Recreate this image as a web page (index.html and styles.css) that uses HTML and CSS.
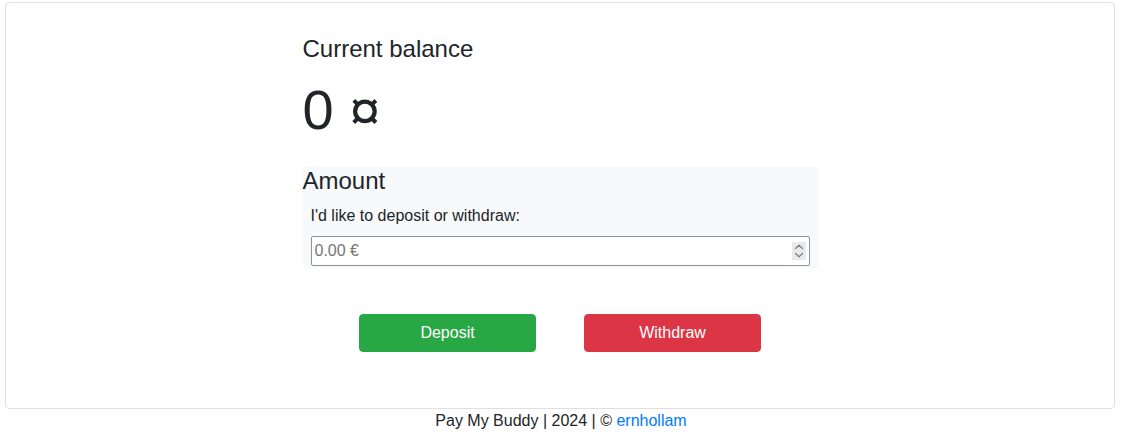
FILE: index.html
```html
<!DOCTYPE html>
<html lang="en">
<head>
<meta charset="utf-8">
<title>Pay My Buddy</title>
<link rel="stylesheet" href="styles.css">
</head>
<body>
<main class="card">
  <div class="content">
    <h4 class="title">Current balance</h4>
    <p class="balance">0 ¤</p>
    <section class="amount">
      <div class="legend">Amount</div>
      <label class="label" for="amount">I'd like to deposit or withdraw:</label>
      <div class="field">
        <input class="input" id="amount" type="number" placeholder="0.00 €">
        <span class="spin" aria-hidden="true">
          <svg width="14" height="18" viewBox="0 0 14 18">
            <rect width="14" height="18" fill="#e9e9ed"/>
            <path d="M3.5 6.5 L7 3.2 L10.5 6.5" fill="none" stroke="#7a7a85" stroke-width="1.2" stroke-linecap="round" stroke-linejoin="round"/>
            <path d="M3.5 11.5 L7 14.8 L10.5 11.5" fill="none" stroke="#7a7a85" stroke-width="1.2" stroke-linecap="round" stroke-linejoin="round"/>
          </svg>
        </span>
      </div>
    </section>
    <div class="actions">
      <button class="btn btn-deposit" type="button">Deposit</button>
      <button class="btn btn-withdraw" type="button">Withdraw</button>
    </div>
  </div>
</main>
<footer class="footer">Pay My Buddy | 2024 | © <a class="link" href="#">ernhollam</a></footer>
</body>
</html>
```
FILE: styles.css
```css
* { box-sizing: border-box; }

body {
  margin: 0;
  font-family: "Liberation Sans", Arial, sans-serif;
  font-size: 16px;
  line-height: 1.5;
  color: #212529;
  background: #fff;
}

.card {
  display: block;
  margin: 2px 7px 0 5px;
  border: 1px solid #dfdfdf;
  border-radius: 4px;
  padding: 32px 0 56px;
}

.content {
  width: 515px;
  margin: 0 auto;
}

.title {
  margin: 0 0 12.2px;
  font-size: 24px;
  font-weight: 500;
  line-height: 1.2;
}

.balance {
  margin: 0 0 24px;
  font-size: 56px;
  font-weight: 300;
  line-height: 1.2;
}

.amount {
  background: #f8f9fa;
  padding: 0 8px 2px;
}

.legend {
  margin: 0 -8px 8px;
  font-size: 24px;
  line-height: 1.2;
}

.label {
  display: block;
  margin-bottom: 8px;
}

.field {
  position: relative;
}

.input {
  display: block;
  width: 100%;
  height: 30px;
  margin: 0;
  padding: 2px 2px 2px 3px;
  border: 1px solid #8f8f9d;
  border-radius: 2px;
  background: #fff;
  font-family: inherit;
  font-size: inherit;
  line-height: inherit;
  color: #212529;
  -moz-appearance: textfield;
}

.input::placeholder {
  color: #767676;
}

.input::-webkit-inner-spin-button,
.input::-webkit-outer-spin-button {
  -webkit-appearance: none;
  margin: 0;
}

.spin {
  position: absolute;
  top: 6px;
  right: 4px;
  display: block;
  width: 14px;
  height: 18px;
  line-height: 0;
}

.actions {
  display: flex;
  justify-content: center;
  gap: 48px;
  margin-top: 46px;
}

.btn {
  width: 177px;
  padding: 6px 12px;
  border: 1px solid transparent;
  border-radius: 4px;
  font-family: inherit;
  font-size: 16px;
  line-height: 1.5;
  color: #fff;
  cursor: pointer;
}

.btn-deposit {
  background: #28a745;
  border-color: #28a745;
}

.btn-withdraw {
  background: #dc3545;
  border-color: #dc3545;
}

.footer {
  text-align: center;
}

.link {
  color: #007bff;
  text-decoration: none;
}
```
